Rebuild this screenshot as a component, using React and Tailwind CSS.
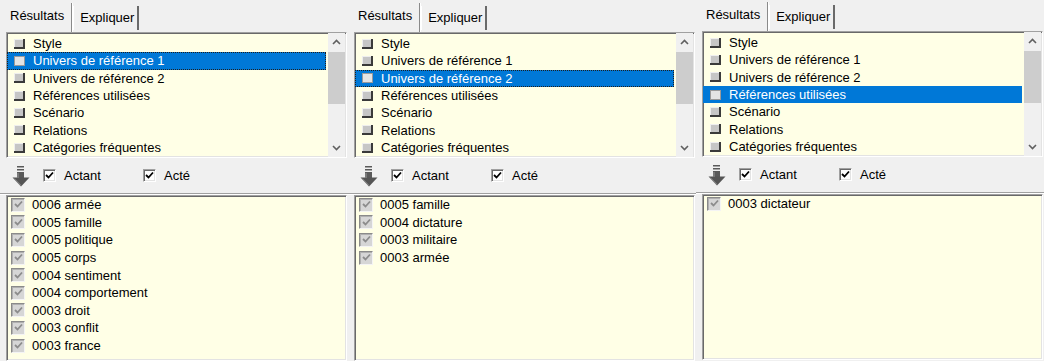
import React from "react";

const topItems = [
  "Style",
  "Univers de référence 1",
  "Univers de référence 2",
  "Références utilisées",
  "Scénario",
  "Relations",
  "Catégories fréquentes",
];

const panels = [
  {
    selected: 1,
    focused: true,
    shift: 0,
    results: [
      "0006 armée",
      "0005 famille",
      "0005 politique",
      "0005 corps",
      "0004 sentiment",
      "0004 comportement",
      "0003 droit",
      "0003 conflit",
      "0003 france",
    ],
  },
  {
    selected: 2,
    focused: true,
    shift: 0,
    results: ["0005 famille", "0004 dictature", "0003 militaire", "0003 armée"],
  },
  {
    selected: 3,
    focused: false,
    shift: -1,
    results: ["0003 dictateur"],
  },
];

const Chevron = ({ down }) => (
  <svg width="9" height="6" viewBox="0 0 9 6" className="block">
    <path
      d={down ? "M1 1 L4.5 4.5 L8 1" : "M1 5 L4.5 1.5 L8 5"}
      fill="none"
      stroke="#606060"
      strokeWidth="1.6"
    />
  </svg>
);

const DownArrow = () => (
  <svg width="18" height="21" viewBox="0 0 18 21" className="block">
    <rect x="5" y="0" width="7" height="1.5" fill="#5a5a5a" />
    <rect x="5" y="3" width="7" height="1.5" fill="#5a5a5a" />
    <rect x="5" y="6" width="7" height="6" fill="#5a5a5a" />
    <path d="M0.5 11.5 H17.5 L9 20.5 Z" fill="#555555" />
    <path d="M6 7 V12 M2 12.5 L9 19.5" stroke="#9a9a9a" strokeWidth="1" fill="none" />
  </svg>
);

const CheckBox = () => (
  <div className="w-[13px] h-[13px] bg-white border border-t-[#a0a0a0] border-l-[#a0a0a0] border-r-white border-b-white shadow-[inset_1px_1px_0_#696969,inset_-1px_-1px_0_#e3e3e3] flex items-center justify-center">
    <svg width="9" height="9" viewBox="0 0 9 9" className="block">
      <path d="M1 4 L3.5 6.5 L8 1.5" fill="none" stroke="#000" strokeWidth="1.8" />
    </svg>
  </div>
);

const GreyCheck = () => (
  <div className="w-[14px] h-[14px] shrink-0 bg-[#d6d6d6] border border-t-[#8a8a8a] border-l-[#8a8a8a] border-r-[#f4f4f4] border-b-[#f4f4f4] shadow-[inset_1px_1px_0_#b0b0b0] flex items-center justify-center">
    <svg width="9" height="9" viewBox="0 0 9 9" className="block">
      <path d="M1 4 L3.5 6.5 L8 1.5" fill="none" stroke="#8c8c8c" strokeWidth="1.8" />
    </svg>
  </div>
);

const Square = ({ light }) => (
  <div
    className={
      light
        ? "w-[11px] h-[10px] shrink-0 bg-[#e4e4e4] border border-[#9a9a9a]"
        : "w-[11px] h-[10px] shrink-0 bg-[#c6c6c6] border-r-2 border-b-2 border-r-[#3a3a3a] border-b-[#3a3a3a] shadow-[inset_1px_1px_0_#eeeeee]"
    }
  />
);

const Sunken = "border border-t-[#a0a0a0] border-l-[#a0a0a0] border-r-white border-b-white shadow-[inset_1px_1px_0_#696969,inset_-1px_-1px_0_#e3e3e3]";

const Panel = ({ selected, focused, shift, results }) => (
  <div
    className="w-[348px] h-[361px] shrink-0 bg-[#f0f0f0] flex flex-col pl-[6px] pr-[1px] overflow-hidden"
    style={{ marginTop: shift }}
  >
    <div className="h-[32px] flex pt-[3px] shrink-0">
      <div className="flex items-center pl-[4px] pr-[7px] pb-[3px] border-r border-r-[#8a8a8a] shadow-[1px_0_0_#ffffff]">
        Résultats
      </div>
      <div className="flex items-center pl-[6px] pr-[3px] mt-[3px] mb-[2px] ml-[1px] border-l border-l-white border-r-2 border-r-[#6a6a6a]">
        Expliquer
      </div>
      <div className="flex-1" />
    </div>

    <div className={"h-[126px] shrink-0 bg-[#ffffe6] flex " + Sunken}>
      <div className="flex-1 pt-[2px] pr-[2px]">
        {topItems.map((t, i) => {
          const sel = i === selected;
          return (
            <div
              key={t}
              className={
                "h-[17.33px] flex items-center gap-[8px] pl-[7px] " +
                (sel
                  ? "bg-[#0078d7] text-white " + (focused ? "outline outline-1 outline-dotted outline-offset-[-1px] outline-[#1f1f1f]" : "")
                  : "")
              }
            >
              <Square light={sel} />
              <span className="leading-none">{t}</span>
            </div>
          );
        })}
      </div>
      <div className="w-[17px] mr-[1px] bg-[#f0f0f0] flex flex-col items-center">
        <div className="h-[18px] w-full flex items-center justify-center">
          <Chevron />
        </div>
        <div className="h-[52px] w-full bg-[#cdcdcd] mt-[1px]" />
        <div className="flex-1" />
        <div className="h-[18px] w-full flex items-center justify-center">
          <Chevron down />
        </div>
      </div>
    </div>

    <div className="h-[36px] shrink-0 -ml-[6px] -mr-[1px] flex items-center border-b border-b-[#a0a0a0] shadow-[0_1px_0_#ffffff]">
      <div className="ml-[12px] pt-[2px]">
        <DownArrow />
      </div>
      <div className="ml-[13px] flex items-center gap-[8px] w-[100px]">
        <CheckBox />
        <span>Actant</span>
      </div>
      <div className="flex items-center gap-[8px]">
        <CheckBox />
        <span>Acté</span>
      </div>
    </div>

    <div className={"flex-1 mt-[1px] bg-[#ffffe6] " + Sunken}>
      {results.map((r) => (
        <div key={r} className="h-[17.6px] flex items-center gap-[7px] pl-[4px]">
          <GreyCheck />
          <span className="leading-none">{r}</span>
        </div>
      ))}
    </div>
  </div>
);

const App = () => {
  return (
    <div
      className="w-[1044px] h-[361px] flex bg-[#f0f0f0] overflow-hidden text-[13px] text-black"
      style={{ fontFamily: '"Liberation Sans", Arial, sans-serif' }}
    >
      {panels.map((p, i) => (
        <Panel key={i} {...p} />
      ))}
    </div>
  );
};

export default App;
